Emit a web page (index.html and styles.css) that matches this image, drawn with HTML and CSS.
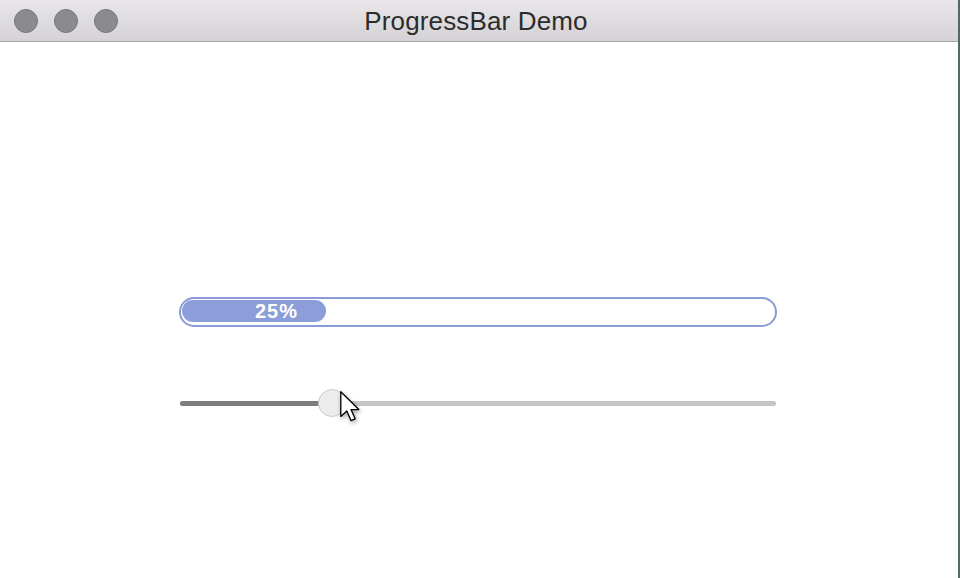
FILE: index.html
```html
<!DOCTYPE html>
<html>
<head>
<meta charset="utf-8">
<title>ProgressBar Demo</title>
<link rel="stylesheet" href="styles.css">
</head>
<body>
<div class="window">
  <div class="titlebar">
    <div class="lights">
      <span class="light"></span>
      <span class="light"></span>
      <span class="light"></span>
    </div>
    <div class="title">ProgressBar Demo</div>
  </div>
  <div class="content">
    <div class="progress">
      <div class="fill" style="width:144px"><span class="label">25%</span></div>
    </div>
    <div class="slider">
      <div class="track">
        <div class="track-fill" style="width:145px"></div>
      </div>
      <div class="thumb"></div>
      <svg class="cursor" width="24" height="36" viewBox="0 0 20 30">
        <path d="M1.5 1.5 L1.5 22 L6.5 17.5 L10 25.5 L13.5 24 L10 16.3 L16.5 16.3 Z" fill="#ffffff" stroke="#000000" stroke-width="1.1" stroke-linejoin="round"/>
      </svg>
    </div>
  </div>
</div>
</body>
</html>
```

FILE: styles.css
```css
html, body {
  margin: 0;
  padding: 0;
  background: #ffffff;
}
body {
  font-family: "Liberation Sans", Arial, sans-serif;
  width: 960px;
  height: 578px;
  overflow: hidden;
}
.window {
  width: 958px;
  height: 578px;
  border-right: 2px solid #4f6b69;
  background: #ffffff;
  display: flex;
  flex-direction: column;
}
.titlebar {
  height: 41px;
  border-bottom: 1px solid #a9a8a9;
  background: linear-gradient(#e9e7e9, #d4d2d4);
  display: flex;
  align-items: center;
  position: relative;
}
.lights {
  display: flex;
  gap: 16px;
  padding-left: 14px;
}
.light {
  width: 22px;
  height: 22px;
  border-radius: 50%;
  background: #8b8b8d;
  border: 1px solid #78787a;
}
.title {
  position: absolute;
  left: 0;
  right: 0;
  top: 6px;
  text-align: center;
  font-size: 26px;
  color: #2c2c2c;
  line-height: 30px;
  padding-right: 6px;
  letter-spacing: 0.15px;
}
.content {
  padding-left: 179px;
  padding-top: 255px;
  display: flex;
  flex-direction: column;
}
.progress {
  width: 592px;
  height: 24px;
  border: 2px solid #8a9bd7;
  border-radius: 15px;
  padding: 1px;
  display: flex;
}
.fill {
  height: 22px;
  border-radius: 11px;
  background: #8c9ed9;
  box-sizing: border-box;
  padding-left: 73px;
}
.label {
  color: #ffffff;
  font-weight: bold;
  font-size: 20px;
  line-height: 23px;
  letter-spacing: 1px;
}
.slider {
  margin-top: 62px;
  margin-left: 1px;
  width: 596px;
  height: 28px;
  position: relative;
  display: flex;
  align-items: center;
}
.track {
  width: 596px;
  height: 5px;
  border-radius: 3px;
  background: #c5c5c5;
  display: flex;
}
.track-fill {
  height: 5px;
  border-radius: 3px 0 0 3px;
  background: #7d7d7d;
}
.thumb {
  position: absolute;
  left: 138px;
  top: 0;
  width: 26px;
  height: 26px;
  border-radius: 50%;
  background: #ececec;
  border: 1px solid #cacaca;
}
.cursor {
  position: absolute;
  left: 159px;
  top: 1px;
  filter: drop-shadow(1px 2px 2px rgba(0,0,0,0.35));
}
```
